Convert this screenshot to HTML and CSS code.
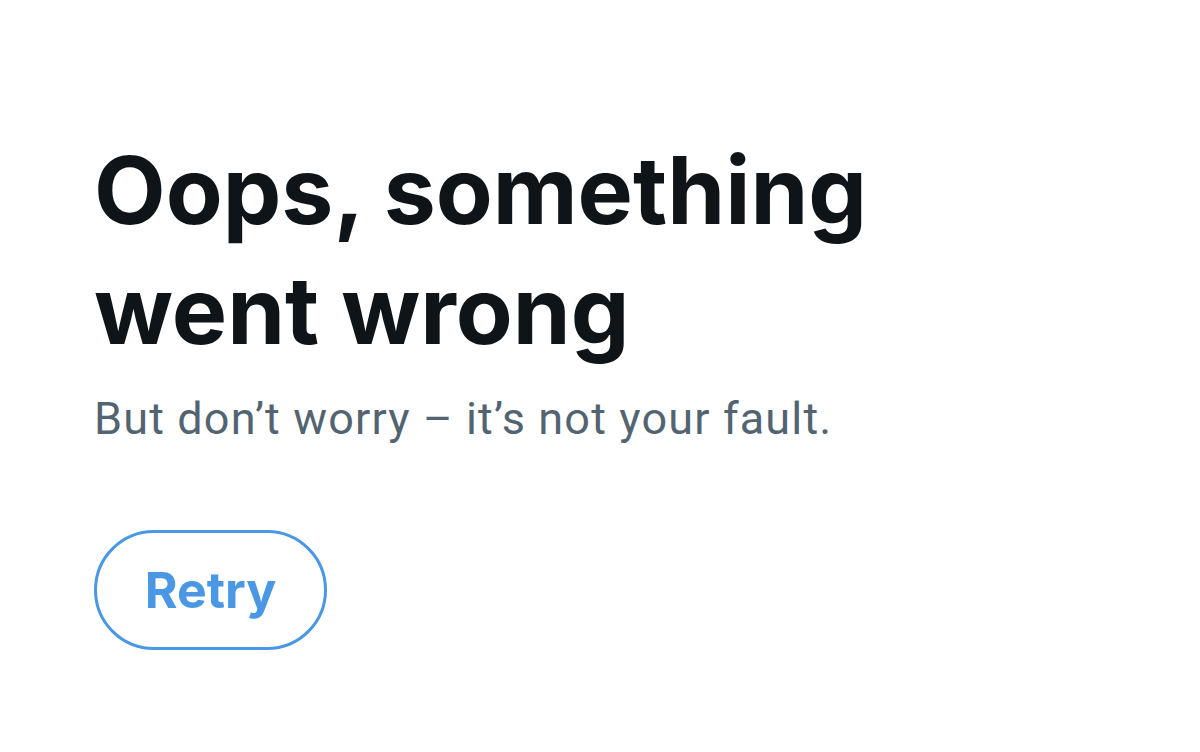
FILE: index.html
```html
<!DOCTYPE html>
<html>
<head>
<meta charset="utf-8">
<link rel="stylesheet" href="styles.css">
</head>
<body>
<main class="error">
  <h1 class="title">Oops, something<br>went wrong</h1>
  <p class="subtitle">But don’t worry – it’s not your fault.</p>
  <button class="retry">Retry</button>
</main>
</body>
</html>
```
FILE: styles.css
```css
html, body { margin: 0; padding: 0; background: #ffffff; }
.error {
  padding: 130px 0 0 94px;
  display: flex;
  flex-direction: column;
  align-items: flex-start;
}
.title {
  margin: 0;
  font-family: Inter, "Noto Sans", sans-serif;
  font-weight: 700;
  font-size: 93px;
  line-height: 120px;
  color: #0f1419;
  letter-spacing: 0;
}
.subtitle {
  margin: 21px 0 0 0;
  font-family: Roboto, "Noto Sans", sans-serif;
  font-size: 45px;
  line-height: 56px;
  letter-spacing: 1.15px;
  color: #536471;
}
.retry {
  margin-top: 83px;
  width: 233px;
  height: 120px;
  border: 3px solid #4a98e3;
  border-radius: 60px;
  background: #fff;
  color: #4a98e3;
  font-family: Inter, "Noto Sans", sans-serif;
  font-weight: 700;
  font-size: 50px;
  padding: 0;
}
```
